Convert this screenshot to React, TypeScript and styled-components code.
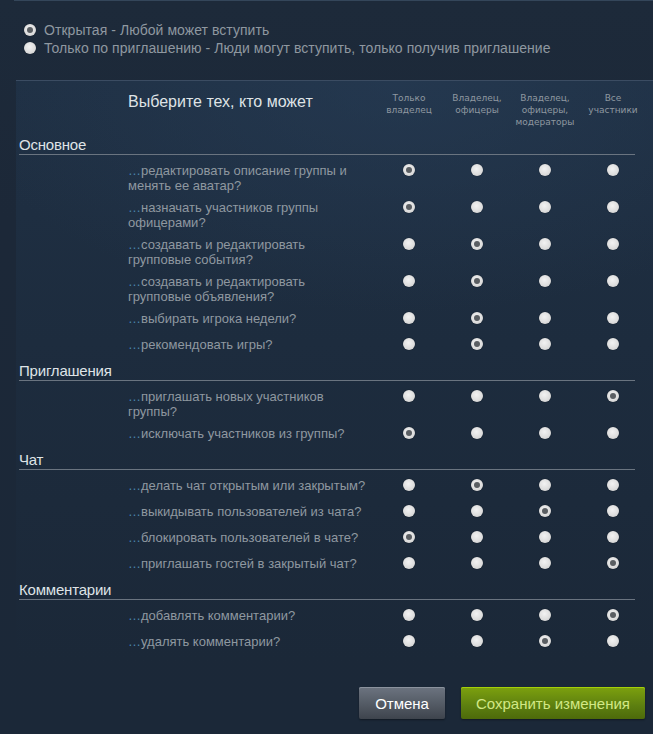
import React from "react";
import styled, { createGlobalStyle } from "styled-components";

const GlobalStyle = createGlobalStyle`
  html, body {
    margin: 0;
    padding: 0;
    background: #1b2838;
  }
  body {
    font-family: "Liberation Sans", Arial, sans-serif;
    color: #8f98a0;
  }
`;

const Page = styled.div`
  width: 653px;
  min-height: 734px;
  overflow: hidden;
  background: linear-gradient(to bottom, #1d2a3a 0%, #1c2838 30%, #1b2838 100%);
`;

const TopRule = styled.div`
  margin-left: 14px;
  height: 1px;
  background: #34465a;
`;

const JoinOptions = styled.div`
  display: flex;
  flex-direction: column;
  gap: 2px;
  padding: 21px 0 0 24px;
  height: 58px;
`;

const JoinOption = styled.label`
  display: flex;
  align-items: center;
  gap: 8px;
  font-size: 14px;
  line-height: 16px;
  color: #8f98a0;
  letter-spacing: 0.05px;
`;

const Radio = styled.span<{ $checked?: boolean }>`
  position: relative;
  display: inline-block;
  flex: none;
  width: 12px;
  height: 12px;
  border-radius: 50%;
  background: radial-gradient(circle at 45% 40%, #f2f2f2 0%, #dcdcdc 60%, #c4c4c4 100%);
  box-shadow: 0 0 1px rgba(0, 0, 0, 0.6);

  &::after {
    content: "";
    display: ${(p) => (p.$checked ? "block" : "none")};
    position: absolute;
    left: 3px;
    top: 3px;
    width: 6px;
    height: 6px;
    border-radius: 50%;
    background: #5a5e62;
  }
`;

const Panel = styled.div`
  margin-left: 16px;
  border-top: 1px solid #3b4c62;
  padding: 11px 0 6px;
  background:
    radial-gradient(ellipse 70% 40% at 60% 0%, rgba(40, 62, 88, 0.55), rgba(40, 62, 88, 0) 100%),
    linear-gradient(to bottom, #1f3044 0%, #1d2c3e 45%, #1b2838 100%);
`;

const Grid = styled.div`
  display: grid;
  grid-template-columns: 112px 247px repeat(4, 68px);
`;

const Title = styled.div`
  grid-column: 2;
  font-size: 16px;
  line-height: 20px;
  color: #dfe3e6;
`;

const ColumnHead = styled.div`
  font-family: "DejaVu Sans", Verdana, sans-serif;
  font-size: 9px;
  line-height: 12px;
  text-align: center;
  color: #8f98a0;
  height: 36px;
`;

const SectionHead = styled.div<{ $first?: boolean }>`
  grid-column: 1 / -1;
  margin: ${(p) => (p.$first ? "8px" : "3px")} 12px 4px 3px;
  font-size: 15px;
  line-height: 18px;
  color: #dfe3e6;
  border-bottom: 1px solid #6a7480;
  letter-spacing: -0.2px;
`;

const Question = styled.div`
  grid-column: 2;
  padding: 4px 0 3px;
  min-height: 19px;
  font-size: 13px;
  line-height: 15px;
  white-space: nowrap;
  color: #8f98a0;
`;

const Dots = styled.span`
  color: #4b86ad;
`;

const Cell = styled.div`
  display: flex;
  justify-content: center;
  align-items: flex-start;
  padding-top: 5px;
`;

const Footer = styled.div`
  display: flex;
  justify-content: flex-end;
  gap: 16px;
  padding: 25px 8px 0 0;
`;

const Button = styled.button<{ $primary?: boolean }>`
  height: 32px;
  padding: 0 ${(p) => (p.$primary ? "15px" : "16px")};
  border-radius: 2px;
  border: none;
  font-family: "Liberation Sans", Arial, sans-serif;
  font-size: 15px;
  cursor: pointer;
  color: ${(p) => (p.$primary ? "#d2e885" : "#ffffff")};
  background: ${(p) =>
    p.$primary
      ? "linear-gradient(to bottom, #7da10e 0%, #5c7e10 60%, #4d6a0a 100%)"
      : "linear-gradient(to bottom, #6c7480 0%, #535a64 55%, #3e444d 100%)"};
  box-shadow: ${(p) =>
    p.$primary
      ? "inset 0 1px 0 #a4d007, 0 1px 2px rgba(0,0,0,0.4)"
      : "inset 0 1px 0 #8b939e, 0 1px 2px rgba(0,0,0,0.4)"};
`;

type Row = { lines: string[]; pick: number };
type Section = { name: string; rows: Row[] };

const columns = [
  ["Только", "владелец"],
  ["Владелец,", "офицеры"],
  ["Владелец,", "офицеры,", "модераторы"],
  ["Все", "участники"],
];

const sections: Section[] = [
  {
    name: "Основное",
    rows: [
      { lines: ["редактировать описание группы и", "менять ее аватар?"], pick: 0 },
      { lines: ["назначать участников группы", "офицерами?"], pick: 0 },
      { lines: ["создавать и редактировать", "групповые события?"], pick: 1 },
      { lines: ["создавать и редактировать", "групповые объявления?"], pick: 1 },
      { lines: ["выбирать игрока недели?"], pick: 1 },
      { lines: ["рекомендовать игры?"], pick: 1 },
    ],
  },
  {
    name: "Приглашения",
    rows: [
      { lines: ["приглашать новых участников", "группы?"], pick: 3 },
      { lines: ["исключать участников из группы?"], pick: 0 },
    ],
  },
  {
    name: "Чат",
    rows: [
      { lines: ["делать чат открытым или закрытым?"], pick: 1 },
      { lines: ["выкидывать пользователей из чата?"], pick: 2 },
      { lines: ["блокировать пользователей в чате?"], pick: 0 },
      { lines: ["приглашать гостей в закрытый чат?"], pick: 3 },
    ],
  },
  {
    name: "Комментарии",
    rows: [
      { lines: ["добавлять комментарии?"], pick: 3 },
      { lines: ["удалять комментарии?"], pick: 2 },
    ],
  },
];

export default function App() {
  return (
    <Page>
      <GlobalStyle />
      <TopRule />
      <JoinOptions>
        <JoinOption>
          <Radio $checked />
          Открытая - Любой может вступить
        </JoinOption>
        <JoinOption>
          <Radio />
          Только по приглашению - Люди могут вступить, только получив приглашение
        </JoinOption>
      </JoinOptions>

      <Panel>
        <Grid>
          <Title>Выберите тех, кто может</Title>
          {columns.map((col, i) => (
            <ColumnHead key={i}>
              {col.map((line, j) => (
                <div key={j}>{line}</div>
              ))}
            </ColumnHead>
          ))}

          {sections.map((section, si) => (
            <React.Fragment key={section.name}>
              <SectionHead $first={si === 0}>{section.name}</SectionHead>
              {section.rows.map((row, ri) => (
                <React.Fragment key={ri}>
                  <Question>
                    <Dots>…</Dots>
                    {row.lines.map((line, li) => (
                      <React.Fragment key={li}>
                        {li > 0 && <br />}
                        {line}
                      </React.Fragment>
                    ))}
                  </Question>
                  {columns.map((_, ci) => (
                    <Cell key={ci}>
                      <Radio $checked={row.pick === ci} />
                    </Cell>
                  ))}
                </React.Fragment>
              ))}
            </React.Fragment>
          ))}
        </Grid>
      </Panel>

      <Footer>
        <Button>Отмена</Button>
        <Button $primary>Сохранить изменения</Button>
      </Footer>
    </Page>
  );
}
